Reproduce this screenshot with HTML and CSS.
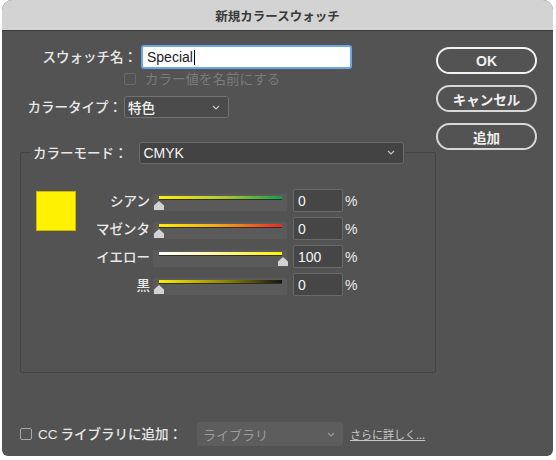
FILE: index.html
```html
<!DOCTYPE html>
<html lang="ja">
<head>
<meta charset="utf-8">
<title>新規カラースウォッチ</title>
<link rel="stylesheet" href="styles.css">
</head>
<body>
<div class="window">
  <div class="titlebar">新規カラースウォッチ</div>
  <div class="content">
    <div class="main">
      <div class="row row-name">
        <span class="lbl lbl-name">スウォッチ名：</span>
        <div class="text-input"><span class="latin">Special</span><span class="caret"></span></div>
      </div>
      <div class="row row-check">
        <span class="checkbox checkbox-disabled"></span>
        <span class="check-text">カラー値を名前にする</span>
      </div>
      <div class="row row-type">
        <span class="lbl lbl-type">カラータイプ：</span>
        <div class="select select-type">
          <span>特色</span>
          <svg class="chev" width="8" height="5" viewBox="0 0 8 5"><polyline points="1,1 4,4 7,1" fill="none" stroke="#c4c4c4" stroke-width="1.2"/></svg>
        </div>
      </div>
      <fieldset class="group">
        <legend class="legend">
          <span class="legend-inner">
            <span class="legend-label">カラーモード：</span>
            <span class="select select-mode">
              <span class="latin">CMYK</span>
              <svg class="chev" width="8" height="5" viewBox="0 0 8 5"><polyline points="1,1 4,4 7,1" fill="none" stroke="#c4c4c4" stroke-width="1.2"/></svg>
            </span>
          </span>
        </legend>
        <div class="group-body">
          <div class="swatch"></div>
          <div class="sliders">
            <div class="slider-row">
              <span class="s-label">シアン</span>
              <div class="track"><div class="bar bar-c"></div><div class="thumb" style="--v:0"></div></div>
              <div class="num">0</div>
              <span class="pct">%</span>
            </div>
            <div class="slider-row">
              <span class="s-label">マゼンタ</span>
              <div class="track"><div class="bar bar-m"></div><div class="thumb" style="--v:0"></div></div>
              <div class="num">0</div>
              <span class="pct">%</span>
            </div>
            <div class="slider-row">
              <span class="s-label">イエロー</span>
              <div class="track"><div class="bar bar-y"></div><div class="thumb" style="--v:100"></div></div>
              <div class="num">100</div>
              <span class="pct">%</span>
            </div>
            <div class="slider-row">
              <span class="s-label">黒</span>
              <div class="track"><div class="bar bar-k"></div><div class="thumb" style="--v:0"></div></div>
              <div class="num">0</div>
              <span class="pct">%</span>
            </div>
          </div>
        </div>
      </fieldset>
    </div>
    <div class="buttons">
      <div class="btn btn-default"><span class="latin">OK</span></div>
      <div class="btn">キャンセル</div>
      <div class="btn">追加</div>
    </div>
  </div>
  <div class="footer">
    <span class="checkbox checkbox-footer"></span>
    <span class="footer-label"><span class="latin">CC</span> ライブラリに追加：</span>
    <div class="select select-lib">
      <span>ライブラリ</span>
      <svg class="chev" width="8" height="5" viewBox="0 0 8 5"><polyline points="1,1 4,4 7,1" fill="none" stroke="#9a9a9a" stroke-width="1.2"/></svg>
    </div>
    <span class="link">さらに詳しく...</span>
  </div>
</div>
</body>
</html>
```

FILE: styles.css
```css
* { box-sizing: border-box; }

body {
  margin: 0;
  background: #ffffff;
  font-family: "Noto Sans CJK JP", "Liberation Sans", sans-serif;
  font-size: 13.5px;
  font-weight: 500;
  color: #e8e8e8;
}

.latin {
  font-family: "Liberation Sans", "Noto Sans CJK JP", sans-serif;
}

.window {
  margin-left: 2px;
  width: 551px;
  height: 456px;
  background: #535353;
  border-radius: 10px 10px 6px 6px;
  overflow: hidden;
  display: flex;
  flex-direction: column;
}

.titlebar {
  height: 31px;
  flex: none;
  background: #d3d3d3;
  border-bottom: 1px solid #3c3c3c;
  display: flex;
  align-items: center;
  justify-content: center;
  font-size: 12.5px;
  font-weight: 700;
  color: #3a3a3a;
  padding-top: 1px;
}

.content {
  display: flex;
  padding-top: 14px;
}

.main {
  width: 416px;
  margin-left: 18px;
}

.row {
  display: flex;
  align-items: center;
}

.lbl {
  text-align: right;
  white-space: nowrap;
  line-height: 1;
}

.lbl-name { width: 117px; margin-right: 4px; }
.lbl-type { width: 102px; margin-right: 2px; }

.row-name { height: 24px; }

.text-input {
  width: 211px;
  height: 24px;
  background: #ffffff;
  border: 2px solid #6ba6ea;
  border-radius: 3px;
  padding-left: 4px;
  display: flex;
  align-items: center;
  color: #222222;
  font-size: 14px;
  font-weight: 400;
}

.caret {
  width: 1px;
  height: 15px;
  background: #000000;
  margin-left: 1px;
}

.row-check {
  height: 16px;
  margin-top: 2px;
  padding-left: 104px;
}

.checkbox {
  width: 12px;
  height: 12px;
  border-radius: 2px;
  flex: none;
}

.checkbox-disabled {
  border: 1px solid #6b6b6b;
}

.check-text {
  margin-left: 9px;
  color: #7b7b7b;
  font-weight: 400;
  line-height: 1;
}

.row-type {
  margin-top: 9px;
  height: 22px;
}

.select {
  display: flex;
  align-items: center;
  justify-content: space-between;
  border-radius: 3px;
}

.select-type {
  width: 105px;
  height: 22px;
  background: #4b4b4b;
  border: 1px solid #727272;
  padding: 0 8px 0 3px;
  color: #f2f2f2;
}

.group {
  margin: 23px 0 0;
  padding: 0;
  height: 232px;
  border: 1px solid #444444;
  border-radius: 2px;
}

.legend {
  margin-left: 10px;
  padding: 0 1px 0 2px;
}

.legend-inner {
  display: flex;
  align-items: center;
  height: 23px;
}

.legend-label {
  margin-right: 11px;
  line-height: 1;
}

.select-mode {
  width: 265px;
  height: 22px;
  background: #434343;
  border: 1px solid #6a6a6a;
  padding: 0 8px 0 4px;
  color: #f4f4f4;
  font-size: 14px;
}

.group-body {
  display: flex;
  padding-top: 25px;
}

.swatch {
  width: 40px;
  height: 40px;
  margin-left: 15px;
  margin-top: 2px;
  background: #fff200;
  border: 1px solid #cbb900;
  flex: none;
}

.sliders {
  display: flex;
  flex-direction: column;
  gap: 5px;
}

.slider-row {
  display: flex;
  align-items: center;
  height: 23px;
}

.s-label {
  width: 74px;
  text-align: right;
  line-height: 1;
  white-space: nowrap;
}

.track {
  position: relative;
  width: 134px;
  height: 17px;
  margin-left: 3px;
  align-self: flex-end;
  margin-bottom: 1px;
  background: #5a5a5a;
}

.bar {
  position: absolute;
  left: 6px;
  right: 5px;
  top: 2px;
  height: 4px;
  border-bottom: 1px solid #2e2e2e;
}

.bar-c { background: linear-gradient(to right, #fff000, #b5cc2e 50%, #16a047); }
.bar-m { background: linear-gradient(to right, #fff000, #f5a31a 50%, #e52a27); }
.bar-y { background: linear-gradient(to right, #ffffff, #fff8b0 40%, #fff200); }
.bar-k { background: linear-gradient(to right, #fff000, #8c8400 55%, #141414); }

.thumb {
  position: absolute;
  top: 7px;
  left: calc(1px + (100% - 10px) * var(--v) / 100);
  width: 10px;
  height: 9px;
  background: #d2d2d2;
  clip-path: polygon(50% 0, 100% 50%, 100% 100%, 0 100%, 0 50%);
}

.num {
  width: 50px;
  height: 23px;
  margin-left: 6px;
  background: #464646;
  border: 1px solid #6a6a6a;
  border-radius: 2px;
  padding-left: 4px;
  display: flex;
  align-items: center;
  font-family: "Liberation Sans", sans-serif;
  font-size: 14px;
  font-weight: 400;
  color: #f4f4f4;
}

.pct {
  margin-left: 2px;
  font-family: "Liberation Sans", sans-serif;
  font-size: 14px;
  color: #ececec;
}

.buttons {
  display: flex;
  flex-direction: column;
  gap: 11px;
  padding-top: 2px;
}

.btn {
  width: 101px;
  height: 27px;
  border: 2px solid #d8d8d8;
  border-radius: 14px;
  display: flex;
  align-items: center;
  justify-content: center;
  font-weight: 700;
  font-size: 13.5px;
  color: #f0f0f0;
}

.btn-default {
  border-color: #f2f2f2;
  font-size: 14px;
}

.footer {
  margin-top: auto;
  margin-bottom: 10px;
  height: 24px;
  display: flex;
  align-items: center;
  padding-left: 18px;
}

.checkbox-footer {
  border: 1px solid #a8a8a8;
}

.footer-label {
  width: 159px;
  margin-left: 6px;
  white-space: nowrap;
  line-height: 1;
}

.select-lib {
  width: 146px;
  height: 24px;
  background: #5d5d5d;
  padding: 0 8px 0 6px;
  color: #9c9c9c;
  font-size: 13px;
  font-weight: 400;
}

.link {
  margin-left: 7px;
  font-size: 11px;
  font-weight: 400;
  color: #c6c6c6;
  text-decoration: underline;
  line-height: 1;
}
```
